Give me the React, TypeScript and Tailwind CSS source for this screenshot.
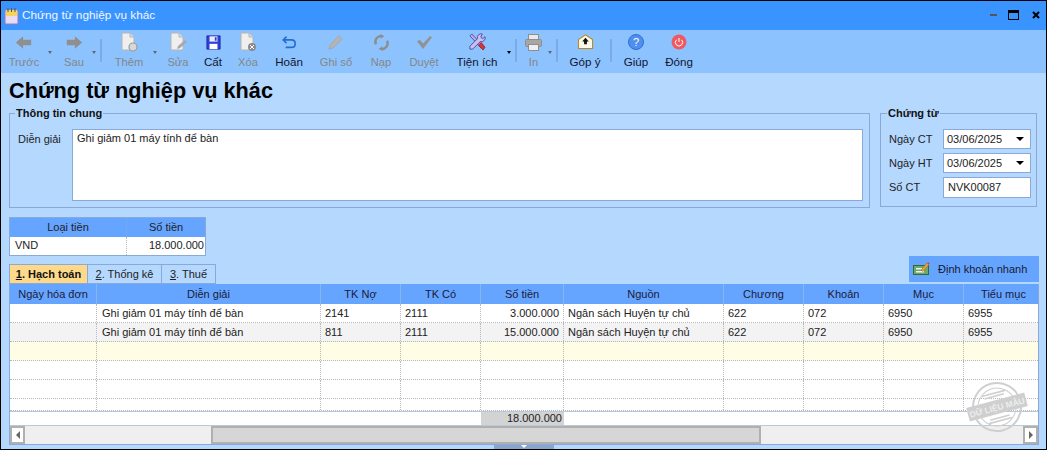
import React from "react";

const G = "#8f8f8f";
const IconBack = ({ flip, c = G }: { flip?: boolean; c?: string }) => (
  <svg width="18" height="15" viewBox="0 0 20 16" style={flip ? { transform: "scaleX(-1)" } : undefined}>
    <path d="M1 8 L9 1 V5 H18 V11 H9 V15 Z" fill={c} />
  </svg>
);
const Doc = ({ children }: { children?: React.ReactNode }) => (
  <svg width="20" height="20" viewBox="0 0 20 20">
    <path d="M3 1 H11 L15 5 V18 H3 Z" fill="#efefef" stroke="#b5b5b5" />
    <path d="M11 1 V5 H15" fill="#ddd" stroke="#b5b5b5" />
    {children}
  </svg>
);
const IconNew = () => <Doc><circle cx="14" cy="15" r="4" fill="#d8d8d8" stroke="#9a9a9a" strokeWidth="1.2" /></Doc>;
const IconEdit = () => <Doc><path d="M9 17 L10 14 L17 8 L19 10 L12 16 Z" fill="#a8a8a8" /></Doc>;
const IconDel = () => <Doc><circle cx="14" cy="15" r="4" fill="#8a8a8a" /><path d="M12 13 L16 17 M16 13 L12 17" stroke="#fff" /></Doc>;
const IconSave = () => (
  <svg width="15" height="15" viewBox="0 0 17 17">
    <path d="M1 1 H16 V16 H1 Z" fill="#2f3fd8" stroke="#1d2aa8" />
    <rect x="4" y="1.5" width="9" height="6" fill="#e9ecff" />
    <rect x="10" y="2.5" width="2" height="4" fill="#2f3fd8" />
    <rect x="4" y="10" width="9" height="6" fill="#fff" />
  </svg>
);
const IconUndo = () => (
  <svg width="16" height="14" viewBox="0 0 18 17" fill="none">
    <path d="M6 2 L2 6 L6 10" stroke="#1f6fd0" strokeWidth="2" />
    <path d="M2 6 H12 C18 6 18 15 12 15 H5" stroke="#1f6fd0" strokeWidth="2" />
  </svg>
);
const IconPencil = () => (
  <svg width="16" height="16" viewBox="0 0 18 18">
    <path d="M1 17 L2.5 12 L12.5 2 L16 5.5 L6 15.5 Z" fill="#b4b4b4" stroke="#a5a5a5" />
  </svg>
);
const IconReload = () => (
  <svg width="17" height="17" viewBox="0 0 18 18" fill="none" stroke="#8e8e8e" strokeWidth="2.6">
    <path d="M3 11 C1 6 5 2 9 2" />
    <path d="M15 7 C17 12 13 16 9 16" />
    <path d="M8 0 L12 2.5 L8 5 Z M10 13 L6 15.5 L10 18 Z" fill="#8e8e8e" stroke="none" />
  </svg>
);
const IconCheck = () => (
  <svg width="17" height="15" viewBox="0 0 18 16">
    <path d="M1 7 L4 5 L7.5 9 L15 1 L17 2.5 L7.5 15 Z" fill="#929292" />
  </svg>
);
const IconTools = () => (
  <svg width="18" height="18" viewBox="0 0 19 19">
    <path d="M2 3 L4 1 L16 14 L14 16 Z" fill="#b9b0e6" stroke="#4a3f9a" strokeWidth="0.9" />
    <path d="M15 1 A4 4 0 0 0 10 6 L2 14 L2 17 L5 17 L13 9 A4 4 0 0 0 18 4 L15.5 6 L13.5 4.5 Z" fill="#c9c0f0" stroke="#4a3f9a" strokeWidth="0.9" />
    <path d="M11 13 L14 10 L18 15 L16 18 Z" fill="#d8323a" stroke="#8c1a20" strokeWidth="0.7" />
  </svg>
);
const IconPrint = () => (
  <svg width="17" height="17" viewBox="0 0 17 17">
    <rect x="3.5" y="0.5" width="10" height="5" fill="#e9e9e9" stroke="#8e8e8e" />
    <rect x="0.5" y="5.5" width="16" height="7" rx="1" fill="#a6a6a6" stroke="#8e8e8e" />
    <rect x="3.5" y="10.5" width="10" height="6" fill="#efefef" stroke="#8e8e8e" />
  </svg>
);
const IconMail = () => (
  <svg width="17" height="16" viewBox="0 0 17 17">
    <path d="M1 6 L8.5 1 L16 6 V15.5 H1 Z" fill="#fff8e6" stroke="#b98a1e" strokeWidth="1.1" />
    <path d="M8.5 4 L12 8 H10 V11 H7 V8 H5 Z" fill="#111" />
  </svg>
);
const IconHelp = () => (
  <svg width="16" height="16" viewBox="0 0 16 16">
    <circle cx="8" cy="8" r="7.5" fill="#4e8ff0" stroke="#2f6fd0" />
    <text x="8" y="12" fontSize="11" fontFamily="Liberation Sans" fill="#fff" textAnchor="middle">?</text>
  </svg>
);
const IconPower = () => (
  <svg width="16" height="16" viewBox="0 0 16 16">
    <circle cx="8" cy="8" r="7.5" fill="#ef5a62" />
    <path d="M8 4 V8 M5.5 5.8 A3.6 3.6 0 1 0 10.5 5.8" fill="none" stroke="#fff" strokeWidth="1" />
  </svg>
);

const Btn = ({ w, label, icon, off }: { w: string; label: string; icon: React.ReactNode; off?: boolean }) => (
  <div className={`${w} shrink-0 h-full flex flex-col items-center`}>
    <div className="h-[22px] flex items-center justify-center">{icon}</div>
    <div className={`mt-[2px] leading-[14px] whitespace-nowrap ${off ? "text-[11.2px] text-[#868686]" : "text-[11.6px] text-[#14142e]"}`}>{label}</div>
  </div>
);
const Arrow = ({ w, dark }: { w: string; dark?: boolean }) => (
  <div className={`${w} shrink-0 flex justify-center pt-[20px]`}>
    <div className={`w-0 h-0 border-x-[2.5px] border-x-transparent border-t-[3px] ${dark ? "border-t-black" : "border-t-[#666]"}`} />
  </div>
);
const Sep = ({ w }: { w: string }) => (
  <div className={`${w} shrink-0 flex justify-center pt-[8px]`}>
    <div className="w-[2px] h-[23px] bg-[#7aaae8]" />
  </div>
);

const cols = ["w-[87px]", "w-[224px]", "w-[80px]", "w-[80px]", "w-[83px]", "w-[160px]", "w-[80px]", "w-[80px]", "w-[80px]", "w-[80px]"];
const heads = ["Ngày hóa đơn", "Diễn giải", "TK Nợ", "TK Có", "Số tiền", "Nguồn", "Chương", "Khoản", "Mục", "Tiểu mục"];
const r = (a: string, c: string) => ["", "Ghi giảm 01 máy tính để bàn", a, "2111", c, "Ngân sách Huyện tự chủ", "622", "072", "6950", "6955"];
const rows = [r("2141", "3.000.000"), r("811", "15.000.000")];

const Row = ({ cells, bg, h = "h-[19px]" }: { cells: string[]; bg: string; h?: string }) => (
  <div className={`flex shrink-0 ${h} ${bg} border-b border-dotted border-[#b8b8b8]`}>
    {cols.map((c, i) => (
      <div key={i} className={`${c} shrink-0 border-r border-dotted border-[#b8b8b8] leading-[18px] whitespace-nowrap overflow-hidden text-[#222] ${i === 1 ? "pl-[5px]" : "px-[4px]"} ${i === 4 ? "text-right" : ""}`}>
        {cells[i] || ""}
      </div>
    ))}
  </div>
);

const DateField = ({ v }: { v: string }) => (
  <div className="h-[20px] w-[88px] bg-white border border-[#8aa9d8] flex items-center justify-between pl-[3px] pr-[6px] text-[#222]">
    <span>{v}</span>
    <div className="w-0 h-0 border-x-[4px] border-x-transparent border-t-[4px] border-t-black" />
  </div>
);

const Stamp = () => (
  <svg className="absolute left-[964px] top-[379px]" width="66" height="56" viewBox="0 0 66 56">
    <g transform="rotate(-15 32 27)" fill="none" stroke="#cfcfcf">
      <circle cx="32" cy="27" r="24" strokeWidth="2" />
      <circle cx="32" cy="27" r="19" strokeWidth="1" />
      <path d="M20 13 H44 M22 16 H42 M22 38 H42 M20 41 H44" strokeWidth="1.6" />
      <rect x="2" y="20" width="60" height="14" fill="#cfcfcf" stroke="none" />
      <text x="32" y="30.5" fontSize="8.5" fontWeight="700" fontFamily="Liberation Sans" fill="#ededed" stroke="none" textAnchor="middle">DỮ LIỆU MẪU</text>
    </g>
  </svg>
);

export default function App() {
  return (
    <div className="relative w-[1047px] h-[450px] overflow-hidden border border-black bg-[#b5d8ff] text-[11px] flex flex-col" style={{ fontFamily: '"Liberation Sans", Arial, sans-serif' }}>
      {/* title bar */}
      <div className="h-[29px] shrink-0 bg-[#3a94ff] flex items-center pl-[3px] pr-[6px]">
        <svg width="16" height="18" viewBox="0 0 16 18">
          <rect x="1" y="3" width="13" height="14" rx="1" fill="#e8dcf5" stroke="#8f7cc0" />
          <rect x="2" y="3" width="11" height="6" fill="#f4d35e" />
          <path d="M4 1 V5 M7.5 1 V5 M11 1 V5" stroke="#555" />
        </svg>
        <div className="ml-[2px] text-[#f2f6ff] text-[11.8px]">Chứng từ nghiệp vụ khác</div>
        <div className="ml-auto flex items-center pb-[2px]">
          <div className="w-[7px] h-[2px] bg-[#555]" />
          <div className="ml-[11px] w-[11px] h-[10px] border border-black border-t-[3px]" />
          <svg className="ml-[13px]" width="8" height="8" viewBox="0 0 8 8"><path d="M1 1 L7 7 M7 1 L1 7" stroke="#000" strokeWidth="2" /></svg>
        </div>
      </div>
      {/* toolbar */}
      <div className="h-[43px] shrink-0 bg-[#8cc3ff] flex pl-[4px] pt-[1px]">
        <Btn w="w-[38px]" label="Trước" icon={<IconBack />} off />
        <Arrow w="w-[14px]" />
        <Btn w="w-[34px]" label="Sau" icon={<IconBack flip />} off />
        <Arrow w="w-[5px]" />
        <Sep w="w-[10px]" />
        <Btn w="w-[46px]" label="Thêm" icon={<IconNew />} off />
        <Arrow w="w-[5px]" />
        <Btn w="w-[42px]" label="Sửa" icon={<IconEdit />} off />
        <Btn w="w-[28px]" label="Cất" icon={<IconSave />} />
        <Btn w="w-[42px]" label="Xóa" icon={<IconDel />} off />
        <Btn w="w-[40px]" label="Hoãn" icon={<IconUndo />} />
        <Btn w="w-[54px]" label="Ghi sổ" icon={<IconPencil />} off />
        <Btn w="w-[36px]" label="Nạp" icon={<IconReload />} off />
        <Btn w="w-[50px]" label="Duyệt" icon={<IconCheck />} off />
        <Btn w="w-[56px]" label="Tiện ích" icon={<IconTools />} />
        <Arrow w="w-[7px]" dark />
        <Sep w="w-[8px]" />
        <Btn w="w-[27px]" label="In" icon={<IconPrint />} off />
        <Arrow w="w-[5px]" />
        <Sep w="w-[10px]" />
        <Btn w="w-[46px]" label="Góp ý" icon={<IconMail />} />
        <Sep w="w-[6px]" />
        <Btn w="w-[44px]" label="Giúp" icon={<IconHelp />} />
        <Btn w="w-[42px]" label="Đóng" icon={<IconPower />} />
      </div>
      {/* content */}
      <div className="flex-1 flex flex-col pl-[8px] pr-[7px] min-h-0">
        <div className="h-[34px] pt-[4px] text-[21.7px] leading-[28px] font-bold text-black whitespace-nowrap">Chứng từ nghiệp vụ khác</div>
        <div className="flex items-start">
          <fieldset className="w-[861px] h-[101px] border border-[#8aa9d8] pl-[8px] pr-[6px]">
            <legend className="-ml-[3px] px-[1px] font-bold text-[#111] leading-[12px]">Thông tin chung</legend>
            <div className="flex mt-[10px]">
              <div className="w-[54px] text-[#222] leading-[20px]">Diễn giải</div>
              <div className="w-[791px] h-[72px] bg-white border border-[#8aa9d8] px-[4px] py-[1px] text-[#222] leading-[14px]">Ghi giảm 01 máy tính để bàn</div>
            </div>
          </fieldset>
          <fieldset className="ml-[10px] w-[157px] h-[100px] border border-[#8aa9d8] pl-[8px]">
            <legend className="-ml-[2px] px-[1px] font-bold text-[#111] leading-[12px]">Chứng từ</legend>
            <div className="grid grid-cols-[54px_88px] gap-y-[4px] mt-[10px] items-center text-[#222]">
              <div>Ngày CT</div><DateField v="03/06/2025" />
              <div>Ngày HT</div><DateField v="03/06/2025" />
              <div>Số CT</div>
              <div className="h-[21px] w-[88px] bg-white border border-[#8aa9d8] flex items-center pl-[4px]">NVK00087</div>
            </div>
          </fieldset>
        </div>
        {/* currency */}
        <div className="mt-[9px] w-[197px] h-[39px] border border-[#8aa9d8] bg-white text-[#222] shrink-0">
          <div className="flex h-[19px] bg-[#66a5ff] text-center leading-[19px]">
            <div className="w-[117px] border-r border-dotted border-[#8aa9d8]">Loại tiền</div>
            <div className="flex-1">Số tiền</div>
          </div>
          <div className="flex h-[18px] leading-[17px]">
            <div className="w-[117px] border-r border-dotted border-[#b8b8b8] pl-[5px]">VND</div>
            <div className="flex-1 text-right pr-[1px]">18.000.000</div>
          </div>
        </div>
        {/* tabs + quick */}
        <div className="flex items-end h-[28px] shrink-0">
          <div className="w-[79px] h-[20px] bg-[#ffd98a] border border-[#8aa9d8] font-bold text-[#111] text-center leading-[18px]"><u>1</u>. Hạch toán</div>
          <div className="w-[74px] h-[20px] border border-l-0 border-[#8aa9d8] text-[#222] text-center leading-[18px]"><u>2</u>. Thống kê</div>
          <div className="w-[54px] h-[20px] border border-l-0 border-[#8aa9d8] text-[#222] text-center leading-[18px]"><u>3</u>. Thuế</div>
          <div className="ml-auto mb-[2px] w-[130px] h-[26px] bg-[#66a5ff] flex items-center pl-[4px] text-[#1a1a2e]">
            <svg width="17" height="14" viewBox="0 0 17 14">
              <rect x="0.5" y="3.5" width="15" height="9" fill="#6fa86a" stroke="#2f6b35" />
              <rect x="3" y="6" width="6" height="1.5" fill="#e9f5e6" />
              <rect x="3" y="9" width="8" height="1.5" fill="#e9f5e6" />
              <path d="M8 8 L14 1 L16 2.5 L10 9.5 Z" fill="#e8a23a" stroke="#a0522d" strokeWidth="0.4" />
              <path d="M14 1 L16 2.5 L16.5 0.5 Z" fill="#d8323a" />
            </svg>
            <span className="ml-[8px]">Định khoản nhanh</span>
          </div>
        </div>
        {/* grid */}
        <div className="w-[1030px] h-[161px] shrink-0 bg-white border-x border-b border-[#8aa9d8] flex flex-col overflow-hidden">
          <div className="flex h-[20px] shrink-0 bg-[#66a5ff] text-[#1a1a3a] text-center leading-[20px]">
            {cols.map((c, i) => (
              <div key={i} className={`${c} shrink-0 border-r border-[#8ab4ee] whitespace-nowrap`}>{heads[i]}</div>
            ))}
          </div>
          <Row cells={rows[0]} bg="bg-white" />
          <Row cells={rows[1]} bg="bg-[#f3f3f3]" />
          <Row cells={[]} bg="bg-[#fffde6]" />
          <Row cells={[]} bg="bg-white" />
          <Row cells={[]} bg="bg-white" />
          <Row cells={[]} bg="bg-white" h="h-[12px]" />
          <div className="flex h-[15px] shrink-0 border-y border-[#b9c9dc] bg-white">
            <div className="w-[471px]" />
            <div className="w-[83px] bg-[#d3d3d3] text-right pr-[2px] leading-[13px] text-[#222]">18.000.000</div>
          </div>
          <div className="flex h-[18px] shrink-0 bg-[#efefef] items-stretch">
            <div className="w-[15px] bg-white border-2 border-[#b0b0b0] flex items-center justify-center">
              <div className="w-0 h-0 border-y-[4px] border-y-transparent border-r-[4px] border-r-[#666]" />
            </div>
            <div className="w-[186px]" />
            <div className="w-[550px] bg-[#d6d6d6] border-2 border-[#b0b0b0]" />
            <div className="flex-1" />
            <div className="w-[15px] bg-white border-2 border-[#b0b0b0] flex items-center justify-center">
              <div className="w-0 h-0 border-y-[4px] border-y-transparent border-l-[4px] border-l-[#666]" />
            </div>
          </div>
        </div>
        <div className="flex-1 flex justify-center min-h-0">
          <div className="w-[60px] h-full bg-[#8aa6cc] flex justify-center">
            <div className="w-0 h-0 border-x-[3px] border-x-transparent border-t-[3px] border-t-white" />
          </div>
        </div>
      </div>
      <Stamp />
    </div>
  );
}
